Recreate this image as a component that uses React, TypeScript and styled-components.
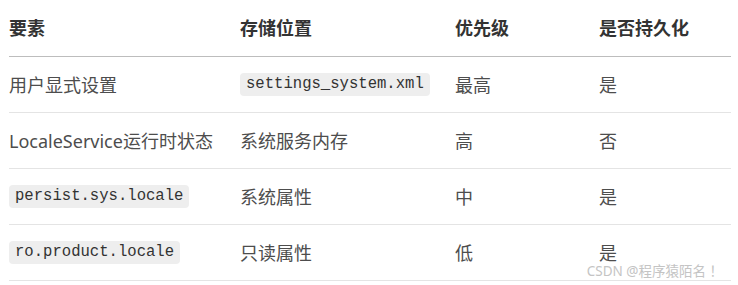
import React from "react";
import styled, { createGlobalStyle } from "styled-components";

const Global = createGlobalStyle`
  html, body { margin: 0; padding: 0; background: #fff; }
  body { font-family: "Noto Sans", "Noto Sans CJK SC", sans-serif; }
`;

const Table = styled.div`
  position: relative;
  width: 722px;
  margin-left: 9px;
`;

const Row = styled.div<{ $head?: boolean }>`
  display: grid;
  grid-template-columns: 231px 215px 144px 132px;
  align-items: center;
  height: ${(p) => (p.$head ? 56 : 55)}px;
  border-bottom: 1px solid ${(p) => (p.$head ? "#bdbdbd" : "#e4e4e4")};
`;

const Cell = styled.div<{ $head?: boolean }>`
  font-size: 18px;
  line-height: 20px;
  color: ${(p) => (p.$head ? "#333" : "#4d4d4d")};
  font-weight: ${(p) => (p.$head ? 700 : 400)};
  white-space: nowrap;
`;

const Code = styled.code`
  display: inline-block;
  font-family: "Liberation Mono", "DejaVu Sans Mono", monospace;
  font-size: 15.6px;
  line-height: 23px;
  height: 23px;
  padding: 0 6px;
  border-radius: 4px;
  background: #eeeeee;
  color: #333;
  vertical-align: middle;
`;

const Watermark = styled.div`
  position: absolute;
  right: 8px;
  bottom: 2px;
  font-size: 13.5px;
  line-height: 16px;
  color: #c4c4c4;
  font-family: "Noto Sans", "Noto Sans CJK SC", sans-serif;
  text-shadow: 0 0 1px #fff;
  white-space: nowrap;
`;

type Cellv = string | { code: string };
const head = ["要素", "存储位置", "优先级", "是否持久化"];
const rows: Cellv[][] = [
  ["用户显式设置", { code: "settings_system.xml" }, "最高", "是"],
  ["LocaleService运行时状态", "系统服务内存", "高", "否"],
  [{ code: "persist.sys.locale" }, "系统属性", "中", "是"],
  [{ code: "ro.product.locale" }, "只读属性", "低", "是"],
];

export default function App() {
  return (
    <>
      <Global />
      <Table>
        <Row $head>
          {head.map((h) => (
            <Cell $head key={h}>{h}</Cell>
          ))}
        </Row>
        {rows.map((r, i) => (
          <Row key={i}>
            {r.map((c, j) => (
              <Cell key={j}>{typeof c === "string" ? c : <Code>{c.code}</Code>}</Cell>
            ))}
          </Row>
        ))}
        <Watermark>CSDN @程序猿陌名 ！</Watermark>
      </Table>
    </>
  );
}
